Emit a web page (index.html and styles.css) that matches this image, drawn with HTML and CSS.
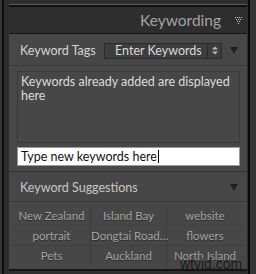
FILE: index.html
```html
<!DOCTYPE html>
<html lang="en">
<head>
  <meta charset="UTF-8">
  <title>Keywording</title>
  <link rel="stylesheet" href="styles.css">
</head>
<body>

  <div class="frame">
    <div class="rule"></div>

    <div class="title">
      <span>Keywording</span>
      <svg class="dots" width="8" height="7" viewBox="0 0 8 7">
        <g fill="#cfcfcf">
          <rect x="0" y="0" width="1" height="1"/><rect x="2" y="0" width="1" height="1"/>
          <rect x="4" y="0" width="1" height="1"/><rect x="6" y="0" width="1" height="1"/>
          <rect x="1" y="2" width="1" height="1"/><rect x="3" y="2" width="1" height="1"/>
          <rect x="5" y="2" width="1" height="1"/>
          <rect x="2" y="4" width="1" height="1"/><rect x="4" y="4" width="1" height="1"/>
          <rect x="3" y="6" width="1" height="1"/>
        </g>
      </svg>
    </div>

    <div class="panel">
      <div class="section-head">
        <span class="label">Keyword Tags</span>
        <div class="select">
          <span>Enter Keywords</span>
          <span class="stepper">
            <svg width="6" height="9" viewBox="0 0 6 9"><path d="M0 3.5L3 0.5L6 3.5ZM0 5.5L3 8.5L6 5.5Z" fill="#bdbdbd"/></svg>
          </span>
        </div>
        <span class="tri"></span>
      </div>

      <div class="tags-body">
        <div class="tags-box">Keywords already added are displayed here</div>
        <div class="new-input">Type new keywords here<span class="caret"></span></div>
      </div>

      <div class="section-head sugg">
        <span class="label">Keyword Suggestions</span>
        <span class="tri"></span>
      </div>

      <div class="grid">
        <div class="cell">New Zealand</div>
        <div class="cell">Island Bay</div>
        <div class="cell">website</div>
        <div class="cell">portrait</div>
        <div class="cell">Dongtai Road…</div>
        <div class="cell">flowers</div>
        <div class="cell">Pets</div>
        <div class="cell">Auckland</div>
        <div class="cell">North Island</div>
      </div>
    </div>

    <div class="watermark">wtvid.com</div>
  </div>

</body>
</html>
```

FILE: styles.css
```css
* {
  box-sizing: border-box;
}
body {
  margin: 0;
  background: #363636;
  font-family: Lato, sans-serif;
  font-size: 12.5px;
}
.frame {
  position: relative;
  width: 248px;
  height: 274px;
  margin-left: 2px;
  padding: 4px 1px 0 5px;
  background: #2e2e2e;
  border-left: 2px solid #0c0c0c;
  border-right: 2px solid #0c0c0c;
}
.rule {
  height: 3px;
  border-top: 1px solid #5a5a5a;
  background: #111;
}
.title {
  height: 26px;
  display: flex;
  align-items: center;
  justify-content: flex-end;
  padding-right: 4px;
  color: #a3a3a3;
  font-size: 15.5px;
}
.title .dots {
  margin-left: 14px;
  margin-top: 1px;
}
.panel {
  background: #474747;
  border-top: 1px solid #151515;
  border-bottom: 2px solid #151515;
}
.section-head {
  height: 32px;
  display: flex;
  align-items: center;
  padding: 2px 9px 0 11px;
  border-bottom: 1px solid #3b3b3b;
  color: #d6d6d6;
}
.section-head .label {
  flex: 1;
}
.select {
  width: 118px;
  height: 16px;
  display: flex;
  align-items: center;
  padding-left: 10px;
  background: #3d3d3d;
  border: 1px solid #2b2b2b;
  color: #dadada;
}
.select span:first-child {
  flex: 1;
}
.stepper {
  width: 14px;
  height: 100%;
  display: flex;
  align-items: center;
  justify-content: center;
  border-left: 1px solid #2b2b2b;
}
.tri {
  width: 0;
  height: 0;
  margin-left: 8px;
  border-left: 4px solid transparent;
  border-right: 4px solid transparent;
  border-top: 7px solid #1f1f1f;
}
.tags-body {
  padding: 5px 7px 5px 8px;
  border-bottom: 1px solid #2e2e2e;
}
.tags-box {
  height: 72px;
  padding: 3px 3px;
  background: #474747;
  border: 1px solid #3a3a3a;
  color: #dcdcdc;
  line-height: 14px;
}
.new-input {
  height: 19px;
  margin-top: 4px;
  padding: 0 3px;
  display: flex;
  align-items: center;
  background: #fff;
  border: 1px solid #9a9a9a;
  color: #111;
}
.caret {
  width: 1px;
  height: 13px;
  margin-left: 1px;
  background: #000;
}
.sugg {
  height: 30px;
  color: #c8c8c8;
  border-bottom: 1px solid #3a3a3a;
}
.grid {
  display: grid;
  grid-template-columns: 78px 76px 76px;
  margin: 0 4px;
  padding: 4px 0 3px;
  font-size: 11.5px;
}
.cell {
  height: 20px;
  line-height: 20px;
  text-align: center;
  color: #a5a5a5;
  text-shadow: 0 1px 0 #2a2a2a;
  border-bottom: 1px solid #414141;
  white-space: nowrap;
}
.cell:nth-child(3n+1),
.cell:nth-child(3n+2) {
  border-right: 1px solid #3c3c3c;
}
.cell:nth-child(n+7) {
  border-bottom: none;
}
.watermark {
  position: absolute;
  left: 176px;
  top: 256px;
  color: #1c1c1c;
  font-family: 'Liberation Sans', sans-serif;
  font-size: 14px;
}
```
